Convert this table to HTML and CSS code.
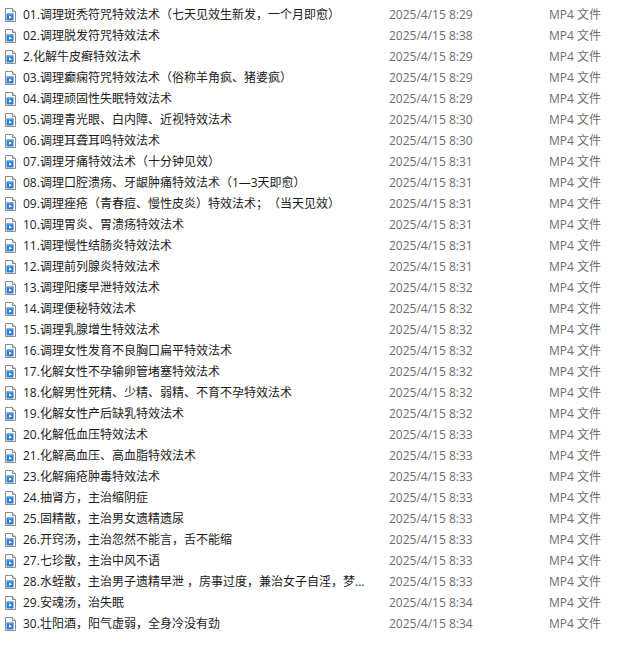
FILE: index.html
```html
<!DOCTYPE html>
<html lang="zh-CN">
<head>
<meta charset="utf-8">
<title>文件列表</title>
<link rel="stylesheet" href="styles.css">
</head>
<body>
<svg width="0" height="0" class="defs" aria-hidden="true">
  <defs>
    <symbol id="mp4" viewBox="0 0 11 14">
      <path d="M0.5 0.5 H7.5 L10.5 3.5 V13.5 H0.5 Z" fill="#fff" stroke="#8c8c8c"/>
      <path d="M7.5 0.5 V3.5 H10.5" fill="#e6e6e6" stroke="#8c8c8c"/>
      <rect x="1.5" y="5.5" width="7" height="7" fill="#2a7fd4"/>
      <rect x="1.5" y="5.5" width="7" height="1.3" fill="#5aa5ea"/>
      <path d="M4 7.6 L7 9.2 L4 10.8 Z" fill="#fff"/>
    </symbol>
  </defs>
</svg>
<div class="list">
  <div class="row"><svg class="ico"><use href="#mp4"/></svg><span class="name">01.调理斑秃符咒特效法术（七天见效生新发，一个月即愈）</span><span class="date">2025/4/15 8:29</span><span class="type">MP4 文件</span></div>
  <div class="row"><svg class="ico"><use href="#mp4"/></svg><span class="name">02.调理脱发符咒特效法术</span><span class="date">2025/4/15 8:38</span><span class="type">MP4 文件</span></div>
  <div class="row"><svg class="ico"><use href="#mp4"/></svg><span class="name">2.化解牛皮癣特效法术</span><span class="date">2025/4/15 8:29</span><span class="type">MP4 文件</span></div>
  <div class="row"><svg class="ico"><use href="#mp4"/></svg><span class="name">03.调理癫痫符咒特效法术（俗称羊角疯、猪婆疯）</span><span class="date">2025/4/15 8:29</span><span class="type">MP4 文件</span></div>
  <div class="row"><svg class="ico"><use href="#mp4"/></svg><span class="name">04.调理顽固性失眠特效法术</span><span class="date">2025/4/15 8:29</span><span class="type">MP4 文件</span></div>
  <div class="row"><svg class="ico"><use href="#mp4"/></svg><span class="name">05.调理青光眼、白内障、近视特效法术</span><span class="date">2025/4/15 8:30</span><span class="type">MP4 文件</span></div>
  <div class="row"><svg class="ico"><use href="#mp4"/></svg><span class="name">06.调理耳聋耳鸣特效法术</span><span class="date">2025/4/15 8:30</span><span class="type">MP4 文件</span></div>
  <div class="row"><svg class="ico"><use href="#mp4"/></svg><span class="name">07.调理牙痛特效法术（十分钟见效）</span><span class="date">2025/4/15 8:31</span><span class="type">MP4 文件</span></div>
  <div class="row"><svg class="ico"><use href="#mp4"/></svg><span class="name">08.调理口腔溃疡、牙龈肿痛特效法术（1—3天即愈）</span><span class="date">2025/4/15 8:31</span><span class="type">MP4 文件</span></div>
  <div class="row"><svg class="ico"><use href="#mp4"/></svg><span class="name">09.调理痤疮（青春痘、慢性皮炎）特效法术；（当天见效）</span><span class="date">2025/4/15 8:31</span><span class="type">MP4 文件</span></div>
  <div class="row"><svg class="ico"><use href="#mp4"/></svg><span class="name">10.调理胃炎、胃溃疡特效法术</span><span class="date">2025/4/15 8:31</span><span class="type">MP4 文件</span></div>
  <div class="row"><svg class="ico"><use href="#mp4"/></svg><span class="name">11.调理慢性结肠炎特效法术</span><span class="date">2025/4/15 8:31</span><span class="type">MP4 文件</span></div>
  <div class="row"><svg class="ico"><use href="#mp4"/></svg><span class="name">12.调理前列腺炎特效法术</span><span class="date">2025/4/15 8:31</span><span class="type">MP4 文件</span></div>
  <div class="row"><svg class="ico"><use href="#mp4"/></svg><span class="name">13.调理阳痿早泄特效法术</span><span class="date">2025/4/15 8:32</span><span class="type">MP4 文件</span></div>
  <div class="row"><svg class="ico"><use href="#mp4"/></svg><span class="name">14.调理便秘特效法术</span><span class="date">2025/4/15 8:32</span><span class="type">MP4 文件</span></div>
  <div class="row"><svg class="ico"><use href="#mp4"/></svg><span class="name">15.调理乳腺增生特效法术</span><span class="date">2025/4/15 8:32</span><span class="type">MP4 文件</span></div>
  <div class="row"><svg class="ico"><use href="#mp4"/></svg><span class="name">16.调理女性发育不良胸口扁平特效法术</span><span class="date">2025/4/15 8:32</span><span class="type">MP4 文件</span></div>
  <div class="row"><svg class="ico"><use href="#mp4"/></svg><span class="name">17.化解女性不孕输卵管堵塞特效法术</span><span class="date">2025/4/15 8:32</span><span class="type">MP4 文件</span></div>
  <div class="row"><svg class="ico"><use href="#mp4"/></svg><span class="name">18.化解男性死精、少精、弱精、不育不孕特效法术</span><span class="date">2025/4/15 8:32</span><span class="type">MP4 文件</span></div>
  <div class="row"><svg class="ico"><use href="#mp4"/></svg><span class="name">19.化解女性产后缺乳特效法术</span><span class="date">2025/4/15 8:32</span><span class="type">MP4 文件</span></div>
  <div class="row"><svg class="ico"><use href="#mp4"/></svg><span class="name">20.化解低血压特效法术</span><span class="date">2025/4/15 8:33</span><span class="type">MP4 文件</span></div>
  <div class="row"><svg class="ico"><use href="#mp4"/></svg><span class="name">21.化解高血压、高血脂特效法术</span><span class="date">2025/4/15 8:33</span><span class="type">MP4 文件</span></div>
  <div class="row"><svg class="ico"><use href="#mp4"/></svg><span class="name">23.化解痈疮肿毒特效法术</span><span class="date">2025/4/15 8:33</span><span class="type">MP4 文件</span></div>
  <div class="row"><svg class="ico"><use href="#mp4"/></svg><span class="name">24.抽肾方，主治缩阴症</span><span class="date">2025/4/15 8:33</span><span class="type">MP4 文件</span></div>
  <div class="row"><svg class="ico"><use href="#mp4"/></svg><span class="name">25.固精散，主治男女遗精遗尿</span><span class="date">2025/4/15 8:33</span><span class="type">MP4 文件</span></div>
  <div class="row"><svg class="ico"><use href="#mp4"/></svg><span class="name">26.开窍汤，主治忽然不能言，舌不能缩</span><span class="date">2025/4/15 8:33</span><span class="type">MP4 文件</span></div>
  <div class="row"><svg class="ico"><use href="#mp4"/></svg><span class="name">27.七珍散，主治中风不语</span><span class="date">2025/4/15 8:33</span><span class="type">MP4 文件</span></div>
  <div class="row"><svg class="ico"><use href="#mp4"/></svg><span class="name" title="28.水蛭散，主治男子遗精早泄 ，房事过度，兼治女子自淫，梦遗滑精">28.水蛭散，主治男子遗精早泄 ，房事过度，兼治女子自淫，梦...</span><span class="date">2025/4/15 8:33</span><span class="type">MP4 文件</span></div>
  <div class="row"><svg class="ico"><use href="#mp4"/></svg><span class="name">29.安魂汤，治失眠</span><span class="date">2025/4/15 8:34</span><span class="type">MP4 文件</span></div>
  <div class="row"><svg class="ico"><use href="#mp4"/></svg><span class="name">30.壮阳酒，阳气虚弱，全身冷没有劲</span><span class="date">2025/4/15 8:34</span><span class="type">MP4 文件</span></div>
</div>
</body>
</html>
```

FILE: styles.css
```css
html, body {
  margin: 0;
  padding: 0;
  background: #ffffff;
}

.defs {
  position: absolute;
  width: 0;
  height: 0;
  overflow: hidden;
}

.list {
  padding-top: 4px;
  font-family: "Open Sans", "Noto Sans CJK SC", sans-serif;
  font-size: 12px;
  text-spacing-trim: space-all;
}

.row {
  display: grid;
  grid-template-columns: 18px 366px 160px auto;
  align-items: center;
  height: 21px;
  line-height: 21px;
  padding-left: 5px;
}

.ico {
  width: 11px;
  height: 14px;
  display: block;
}

.name {
  color: #1b1b1b;
  white-space: nowrap;
  overflow: hidden;
  text-overflow: ellipsis;
  padding-right: 8px;
}

.date {
  color: #6d6d6d;
  white-space: nowrap;
}

.type {
  color: #6d6d6d;
  white-space: nowrap;
}
```
